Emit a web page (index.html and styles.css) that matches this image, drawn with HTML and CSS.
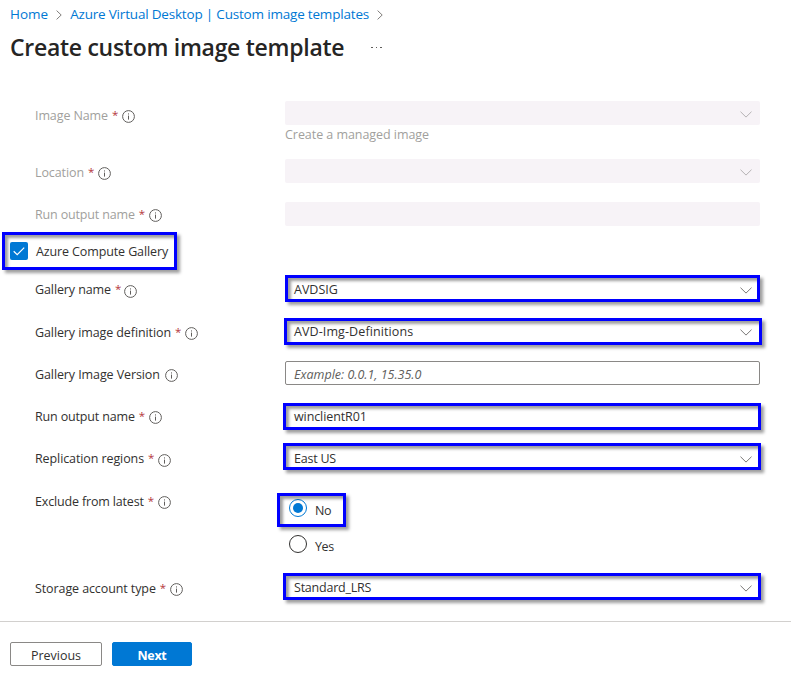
FILE: index.html
```
<!DOCTYPE html>
<html lang="en">
<head>
<meta charset="utf-8">
<title>Create custom image template</title>
<link rel="stylesheet" href="styles.css">
</head>
<body>
<svg class="defs" aria-hidden="true">
  <symbol id="info" viewBox="0 0 13 13"><circle cx="6.5" cy="6.5" r="5.9"/><path d="M6.5 5.6V9.6M6.5 3.4V4.5"/></symbol>
  <symbol id="down" viewBox="0 0 12 7"><path d="M.5 .7L6 6.1L11.5 .7"/></symbol>
  <symbol id="next" viewBox="0 0 6 10"><path d="M.6 .6L5.2 5L.6 9.4"/></symbol>
</svg>
<nav class="crumbs">
  <a class="crumb-home">Home</a><svg class="sep"><use href="#next"/></svg><a class="crumb-page">Azure Virtual Desktop | Custom image templates</a><svg class="sep"><use href="#next"/></svg>
</nav>
<header class="heading"><h1>Create custom image template</h1><span class="more"><i></i><i></i><i></i></span></header>
<main class="form">
  <div class="row r-image disabled">
    <div class="label"><span>Image Name</span><b>*</b><svg class="info"><use href="#info"/></svg></div>
    <div class="control"><div class="field"><svg class="down"><use href="#down"/></svg></div><p class="hint">Create a managed image</p></div>
  </div>
  <div class="row r-location disabled">
    <div class="label"><span>Location</span><b>*</b><svg class="info"><use href="#info"/></svg></div>
    <div class="control"><div class="field"><svg class="down"><use href="#down"/></svg></div></div>
  </div>
  <div class="row r-output disabled">
    <div class="label"><span>Run output name</span><b>*</b><svg class="info"><use href="#info"/></svg></div>
    <div class="control"><div class="field"></div></div>
  </div>
  <div class="gallery-row"><div class="mark check-mark"><span class="check"><svg viewBox="0 0 18 18"><path d="M3.7 9.2L7.2 12.6L14.2 5.6"/></svg></span><span class="check-text">Azure Compute Gallery</span></div></div>
  <div class="row r-gallery">
    <div class="label"><span>Gallery name</span><b>*</b><svg class="info"><use href="#info"/></svg></div>
    <div class="control"><div class="field"><span class="value">AVDSIG</span><svg class="down"><use href="#down"/></svg><i class="mark m-gallery"></i></div></div>
  </div>
  <div class="row r-definition">
    <div class="label"><span>Gallery image definition</span><b>*</b><svg class="info"><use href="#info"/></svg></div>
    <div class="control"><div class="field"><span class="value">AVD-Img-Definitions</span><svg class="down"><use href="#down"/></svg><i class="mark m-definition"></i></div></div>
  </div>
  <div class="row r-version">
    <div class="label"><span>Gallery Image Version</span><svg class="info"><use href="#info"/></svg></div>
    <div class="control"><div class="field outlined"><span class="placeholder">Example: 0.0.1, 15.35.0</span></div></div>
  </div>
  <div class="row r-run">
    <div class="label"><span>Run output name</span><b>*</b><svg class="info"><use href="#info"/></svg></div>
    <div class="control"><div class="field"><span class="value">winclientR01</span><i class="mark m-run"></i></div></div>
  </div>
  <div class="row r-regions">
    <div class="label"><span>Replication regions</span><b>*</b><svg class="info"><use href="#info"/></svg></div>
    <div class="control"><div class="field"><span class="value">East US</span><svg class="down"><use href="#down"/></svg><i class="mark m-regions"></i></div></div>
  </div>
  <div class="row r-exclude">
    <div class="label"><span>Exclude from latest</span><b>*</b><svg class="info"><use href="#info"/></svg></div>
    <div class="control radios">
      <div class="radio on"><svg viewBox="0 0 18 18"><circle class="ring" cx="9" cy="9" r="8.5"/><circle class="dot" cx="9" cy="9" r="5"/></svg><span>No</span><i class="mark m-no"></i></div>
      <div class="radio"><svg viewBox="0 0 18 18"><circle class="ring" cx="9" cy="9" r="8.5"/></svg><span>Yes</span></div>
    </div>
  </div>
  <div class="row r-storage">
    <div class="label"><span>Storage account type</span><b>*</b><svg class="info"><use href="#info"/></svg></div>
    <div class="control"><div class="field"><span class="value">Standard_LRS</span><svg class="down"><use href="#down"/></svg><i class="mark m-storage"></i></div></div>
  </div>
</main>
<footer class="actions"><button class="btn previous">Previous</button><button class="btn primary">Next</button></footer>
</body>
</html>
```
FILE: styles.css
```
* { box-sizing: border-box; }
body { margin: 0; background: #fff; color: #323130; font: 12.5px/24px "Open Sans", "Noto Sans", sans-serif; height: 679px; overflow: hidden; }
svg { fill: none; flex: none; display: block; }
.defs { position: absolute; width: 0; height: 0; }
.crumbs { display: flex; align-items: center; height: 28px; padding-left: 10px; font-size: 13.5px; color: #0078d4; white-space: nowrap; }
.crumb-page { letter-spacing: -.19px; }
.sep { width: 6px; height: 10px; margin: 2px 8px 0; stroke: #807e7c; }
.heading { display: flex; align-items: center; height: 73px; padding: 0 0 35px 10px; color: #262524; }
h1 { margin: 0; font-size: 23px; line-height: 38px; font-weight: 600; white-space: nowrap; width: 361px; letter-spacing: -.28px; }
.more { display: flex; gap: 3px; margin-top: 1px; }
.more i { width: 1.5px; height: 1.5px; background: #605e5c; }
.row { display: grid; grid-template-columns: 250px 475px; padding-left: 35px; }
.label { display: flex; align-items: center; height: 24px; margin-top: 2px; white-space: nowrap; letter-spacing: -.1px; }
.label b { font-size: 11.5px; font-weight: 400; color: #b5363c; width: 5px; margin: -2px 0 0 4px; }
.info { width: 13px; height: 13px; margin: 0 0 0 5px; stroke: #605e5c; stroke-width: 1; }
.field { position: relative; height: 24px; padding: 0 8px 0 9px; display: flex; align-items: center; white-space: nowrap; border-radius: 2px; }
.value { margin-top: 2px; }
.field .down { width: 12px; height: 7px; margin: 2px 0 0 auto; stroke: #7a7876; stroke-width: 1; }
.disabled .label span, .hint { color: #a19f9d; }
.disabled .field { background: #f7f3f7; }
.disabled .down { stroke: #b5b2b4; }
.hint { margin: 1px 0 0; line-height: 18px; letter-spacing: -.05px; }
.outlined { border: 1px solid #8a8886; padding-left: 8px; }
.placeholder { margin-top: 4px; font-style: italic; color: #605e5c; }
.r-image { height: 58px; }
.r-image .label { margin-top: 3px; }
.r-location { height: 43px; }
.r-output { height: 30px; }
.gallery-row { height: 45px; padding-left: 2px; }
.r-gallery, .r-definition, .r-run { height: 42px; }
.r-version, .r-regions { height: 43px; }
.r-exclude { height: 86px; }
.r-storage { height: 46px; }
.r-output .label, .r-gallery .label, .r-run .label, .r-regions .label, .r-exclude .label { margin-top: 1px; }
.r-gallery .info, .r-regions .info { margin-top: 2px; }
.r-output .label, .r-run .label, .r-exclude .label { letter-spacing: -.16px; }
.r-gallery .info { margin-left: 4px; }
.r-definition .value { letter-spacing: .1px; }
.r-run .value { letter-spacing: -.1px; }
.r-regions .value, .r-storage .value { letter-spacing: -.22px; }
.mark { border: 3px solid #00f; box-shadow: 3px 3px 3px rgba(0,0,0,.38), inset 3px 3px 3px rgba(0,0,0,.38); }
i.mark { position: absolute; }
.check-mark { display: flex; align-items: center; width: 175px; height: 38px; padding-left: 5px; white-space: nowrap; }
.check { width: 18px; height: 18px; margin-right: 8px; border-radius: 2px; background: #0078d4; }
.check-text { margin-top: 2px; letter-spacing: -.12px; }
.check svg { stroke: #fff; stroke-width: 1.2; }
.m-gallery { left: 0; right: 0; top: -2px; height: 27px; }
.m-definition { left: -1px; right: -2px; top: -1px; height: 27px; }
.m-run { left: -2px; right: -1px; top: -1px; height: 27px; }
.m-regions { left: -2px; right: -1px; top: -3px; height: 27px; }
.m-storage { left: -2px; right: -1px; top: -2px; height: 27px; }
.radios { padding: 10px 0 0 4px; }
.radio { position: relative; display: flex; height: 36px; align-items: flex-start; }
.radio svg { width: 18px; height: 18px; margin-right: 8px; }
.radio span { line-height: 23px; letter-spacing: -.4px; }
.ring { stroke: #323130; }
.on .ring { stroke: #0078d4; }
.dot { fill: #0078d4; }
.m-no { left: -12px; top: -6px; width: 69px; height: 34px; }
.actions { display: flex; gap: 10px; height: 58px; padding: 20px 10px; border-top: 1px solid #d2d0ce; }
.btn { width: 92px; height: 24px; padding: 3px 0 0; border: 1px solid #8a8886; border-radius: 2px; background: #fff; color: #323130; font: 12.5px/19px "Open Sans", sans-serif; }
.primary { width: 80px; border-color: #0078d4; background: #0078d4; color: #fff; font-weight: 700; letter-spacing: -.3px; }
```
